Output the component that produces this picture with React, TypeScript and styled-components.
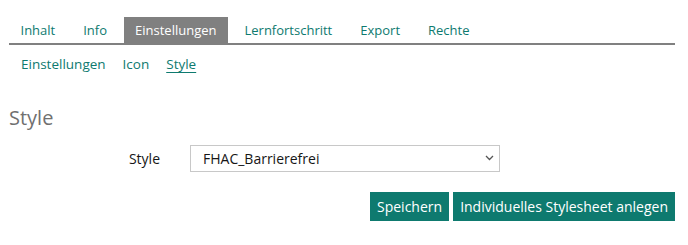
import styled, { createGlobalStyle } from "styled-components";

const GlobalStyle = createGlobalStyle`
  body {
    margin: 0;
    background: #fff;
    font-family: "Open Sans", "Noto Sans", sans-serif;
    font-size: 14px;
    color: #161616;
  }
`;

const Page = styled.div`
  width: 666px;
  padding: 17px 13px 0 9px;
`;

const TabBar = styled.ul`
  display: flex;
  list-style: none;
  margin: 0;
  padding: 0;
  border-bottom: 2px solid #808080;
`;

const Tab = styled.li<{ $active?: boolean }>`
  height: 26px;
  line-height: 26px;
  padding: 0 11.5px;
  margin-right: 5px;
  font-size: 13px;
  color: ${(p) => (p.$active ? "#fff" : "#0e7a6f")};
  background: ${(p) => (p.$active ? "#808080" : "transparent")};
`;

const SubTabs = styled.div`
  display: flex;
  gap: 17px;
  padding: 9px 0 0 12px;
  line-height: 20px;
  font-size: 13.5px;
`;

const SubTab = styled.a<{ $active?: boolean }>`
  color: #0e7a6f;
  text-decoration: ${(p) => (p.$active ? "underline" : "none")};
  text-underline-offset: 3px;
`;

const Heading = styled.h2`
  margin: 30px 0 0;
  font-size: 20px;
  font-weight: 400;
  line-height: 27px;
  color: #707070;
`;

const FormRow = styled.div`
  display: grid;
  grid-template-columns: 151px 310px;
  column-gap: 30px;
  align-items: center;
  margin-top: 14px;
`;

const Label = styled.label`
  text-align: right;
`;

const SelectWrap = styled.div`
  position: relative;
`;

const Select = styled.select`
  appearance: none;
  width: 100%;
  height: 27px;
  box-sizing: border-box;
  padding: 0 24px 0 12px;
  border: 1px solid #c8c8c8;
  border-radius: 0;
  background: #fff;
  font: inherit;
  color: #161616;
`;

const Chevron = styled.svg`
  position: absolute;
  right: 6px;
  top: 10px;
  pointer-events: none;
`;

const Actions = styled.div`
  display: flex;
  justify-content: flex-end;
  gap: 4px;
  margin-top: 20px;
`;

const Button = styled.button`
  height: 29px;
  padding: 0 7px;
  border: none;
  border-radius: 0;
  background: #0e7a6f;
  color: #fff;
  font: inherit;
`;

export default function App() {
  const tabs = ["Inhalt", "Info", "Einstellungen", "Lernfortschritt", "Export", "Rechte"];
  return (
    <Page>
      <GlobalStyle />
      <TabBar>
        {tabs.map((t) => (
          <Tab key={t} $active={t === "Einstellungen"}>
            {t}
          </Tab>
        ))}
      </TabBar>
      <SubTabs>
        <SubTab>Einstellungen</SubTab>
        <SubTab>Icon</SubTab>
        <SubTab $active>Style</SubTab>
      </SubTabs>
      <Heading>Style</Heading>
      <FormRow>
        <Label>Style</Label>
        <SelectWrap>
          <Select defaultValue="fhac">
            <option value="fhac">FHAC_Barrierefrei</option>
          </Select>
          <Chevron width="9" height="6" viewBox="0 0 9 6">
            <path d="M1 1l3.5 3.5L8 1" fill="none" stroke="#555" strokeWidth="1.3" />
          </Chevron>
        </SelectWrap>
      </FormRow>
      <Actions>
        <Button>Speichern</Button>
        <Button>Individuelles Stylesheet anlegen</Button>
      </Actions>
    </Page>
  );
}
